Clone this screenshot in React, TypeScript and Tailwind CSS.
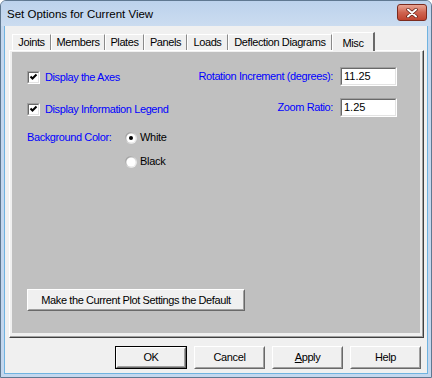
import React from "react";

const font = { fontFamily: '"Liberation Sans", Arial, sans-serif' };

function Sunken({ children, className = "" }: { children?: React.ReactNode; className?: string }) {
  return (
    <div className={`border border-t-[#a0a0a0] border-l-[#a0a0a0] border-b-white border-r-white ${className}`}>
      <div className="w-full h-full border border-t-[#696969] border-l-[#696969] border-b-[#e3e3e3] border-r-[#e3e3e3] bg-white">
        {children}
      </div>
    </div>
  );
}

function Check({ label }: { label: string }) {
  return (
    <div className="flex items-center h-[13px]">
      <Sunken className="w-[13px] h-[13px] shrink-0">
        <svg width="9" height="9" viewBox="0 0 9 9" className="block">
          <path d="M1.5 3.5 L3.5 5.5 L7.5 1.5" fill="none" stroke="#000" strokeWidth="2" />
        </svg>
      </Sunken>
      <span className="ml-[5px] text-[11px] leading-[13px] tracking-[-0.4px] text-[#0000ff] whitespace-nowrap">{label}</span>
    </div>
  );
}

function Radio({ label, checked }: { label: string; checked?: boolean }) {
  return (
    <div className="flex items-center h-[13px]">
      <svg width="12" height="12" viewBox="0 0 12 12" className="block shrink-0">
        <defs>
          <linearGradient id={`rg-${label}`} x1="0" y1="0" x2="1" y2="1">
            <stop offset="0" stopColor="#8a8a8a" />
            <stop offset="0.5" stopColor="#d0d0d0" />
            <stop offset="1" stopColor="#ffffff" />
          </linearGradient>
        </defs>
        <circle cx="6" cy="6" r="6" fill={`url(#rg-${label})`} />
        <circle cx="6" cy="6" r="4.6" fill="#ffffff" />
        {checked && <circle cx="6" cy="6" r="2" fill="#000" />}
      </svg>
      <span className="ml-[3px] text-[11px] leading-[13px] tracking-[-0.3px] text-black">{label}</span>
    </div>
  );
}

function Btn({ children, className = "", def }: { children: React.ReactNode; className?: string; def?: boolean }) {
  const inner = (
    <div className="w-full h-full border border-t-white border-l-white border-b-[#696969] border-r-[#696969]">
      <div className="w-full h-full border border-t-[#f0f0f0] border-l-[#f0f0f0] border-b-[#a0a0a0] border-r-[#a0a0a0] bg-[#f0f0f0] flex items-center justify-center text-[11px] tracking-[-0.4px] text-black whitespace-nowrap">
        {children}
      </div>
    </div>
  );
  return def ? <div className={`border border-black ${className}`}>{inner}</div> : <div className={className}>{inner}</div>;
}

const tabs: { name: string; w: number }[] = [
  { name: "Joints", w: 39 },
  { name: "Members", w: 54 },
  { name: "Plates", w: 39 },
  { name: "Panels", w: 43 },
  { name: "Loads", w: 41 },
  { name: "Deflection Diagrams", w: 104 },
];

export default function App() {
  return (
    <div
      className="w-[432px] h-[378px] flex flex-col bg-[#c4d7ee] border border-[#5f7891] rounded-t-[6px] overflow-hidden"
      style={font}
    >
      {/* title bar */}
      <div className="h-[25px] shrink-0 flex items-start justify-between pl-[6px] pr-[4px] bg-gradient-to-b from-[#bcd2ec] to-[#cbdcf0]">
        <span className="mt-[6px] text-[11.5px] leading-[14px] text-black">Set Options for Current View</span>
        <div className="mt-[3px] w-[30px] h-[17px] rounded-[3px] border border-[#7b2a1e] bg-gradient-to-b from-[#e8a595] via-[#cf6450] to-[#c0432e] flex items-center justify-center">
          <svg width="12" height="10" viewBox="0 0 12 10" className="block">
            <path d="M2 1.5 L10 8.5 M10 1.5 L2 8.5" stroke="#5a1a10" strokeWidth="3.4" strokeLinecap="round" />
            <path d="M2 1.5 L10 8.5 M10 1.5 L2 8.5" stroke="#ffffff" strokeWidth="2" strokeLinecap="round" />
          </svg>
        </div>
      </div>

      {/* client */}
      <div className="flex-1 mx-[3px] mb-[3px] bg-[#f0f0f0] border-l border-b border-r border-[#6fb3e0] flex flex-col">
        <div className="h-[6px]" />
        {/* tab strip */}
        <div className="h-[18px] flex pl-[7px] items-end relative z-10">
          {tabs.map((t) => (
            <div
              key={t.name}
              style={{ width: t.w }}
              className="h-[16px] border-t border-l border-t-white border-l-white border-r border-r-[#8a8a8a] flex items-center justify-center text-[11px] tracking-[-0.4px] text-black bg-[#f0f0f0] whitespace-nowrap"
            >
              {t.name}
            </div>
          ))}
          <div className="w-[43px] h-[19px] -mb-[1px] border-t border-l border-white border-r-2 border-r-[#696969] bg-[#f0f0f0] flex items-start justify-center pt-[2px] text-[11px] tracking-[-0.4px] text-black">
            Misc
          </div>
        </div>
        {/* tab body */}
        <div className="ml-[4px] mr-[3px] h-[288px] border-t border-l border-white border-r border-b border-r-[#404040] border-b-[#404040] flex">
          <div className="flex-1 border-r border-b border-r-[#a0a0a0] border-b-[#a0a0a0] pt-[1px] pl-[2px] pr-[2px] pb-[3px] flex">
            <div className="flex-1 bg-[#c0c0c0] flex flex-col">
              <div className="flex">
                {/* left column */}
                <div className="pl-[15px] pt-[19px] flex flex-col w-[165px] shrink-0">
                  <Check label="Display the Axes" />
                  <div className="h-[19px]" />
                  <Check label="Display Information Legend" />
                  <div className="h-[15px]" />
                  <div className="flex items-start">
                    <span className="text-[11px] leading-[13px] tracking-[-0.4px] text-[#0000ff] w-[98px] whitespace-nowrap">Background Color:</span>
                    <div className="flex flex-col gap-[11px]">
                      <Radio label="White" checked />
                      <Radio label="Black" />
                    </div>
                  </div>
                </div>
                {/* right column */}
                <div className="flex-1 pt-[15px] flex flex-col items-end pr-[23px] gap-[12px]">
                  <div className="flex items-center">
                    <span className="text-[11px] tracking-[-0.4px] text-[#0000ff] mr-[7px] whitespace-nowrap">Rotation Increment (degrees):</span>
                    <Sunken className="w-[57px] h-[19px]">
                      <div className="pl-[2px] text-[11px] leading-[15px] text-black">11.25</div>
                    </Sunken>
                  </div>
                  <div className="flex items-center">
                    <span className="text-[11px] tracking-[-0.4px] text-[#0000ff] mr-[7px] whitespace-nowrap">Zoom Ratio:</span>
                    <Sunken className="w-[57px] h-[19px]">
                      <div className="pl-[2px] text-[11px] leading-[15px] text-black">1.25</div>
                    </Sunken>
                  </div>
                </div>
              </div>
              <div className="mt-auto mb-[22px] ml-[15px]">
                <Btn className="w-[218px] h-[22px]">Make the Current Plot Settings the Default</Btn>
              </div>
            </div>
          </div>
        </div>
        {/* bottom buttons */}
        <div className="mt-[8px] flex justify-end gap-[7px] pr-[6px]">
          <Btn def className="w-[72px] h-[23px]">OK</Btn>
          <Btn className="w-[71px] h-[23px]">Cancel</Btn>
          <Btn className="w-[71px] h-[23px]">
            <span>
              <span className="underline">A</span>pply
            </span>
          </Btn>
          <Btn className="w-[71px] h-[23px]">Help</Btn>
        </div>
      </div>
    </div>
  );
}
